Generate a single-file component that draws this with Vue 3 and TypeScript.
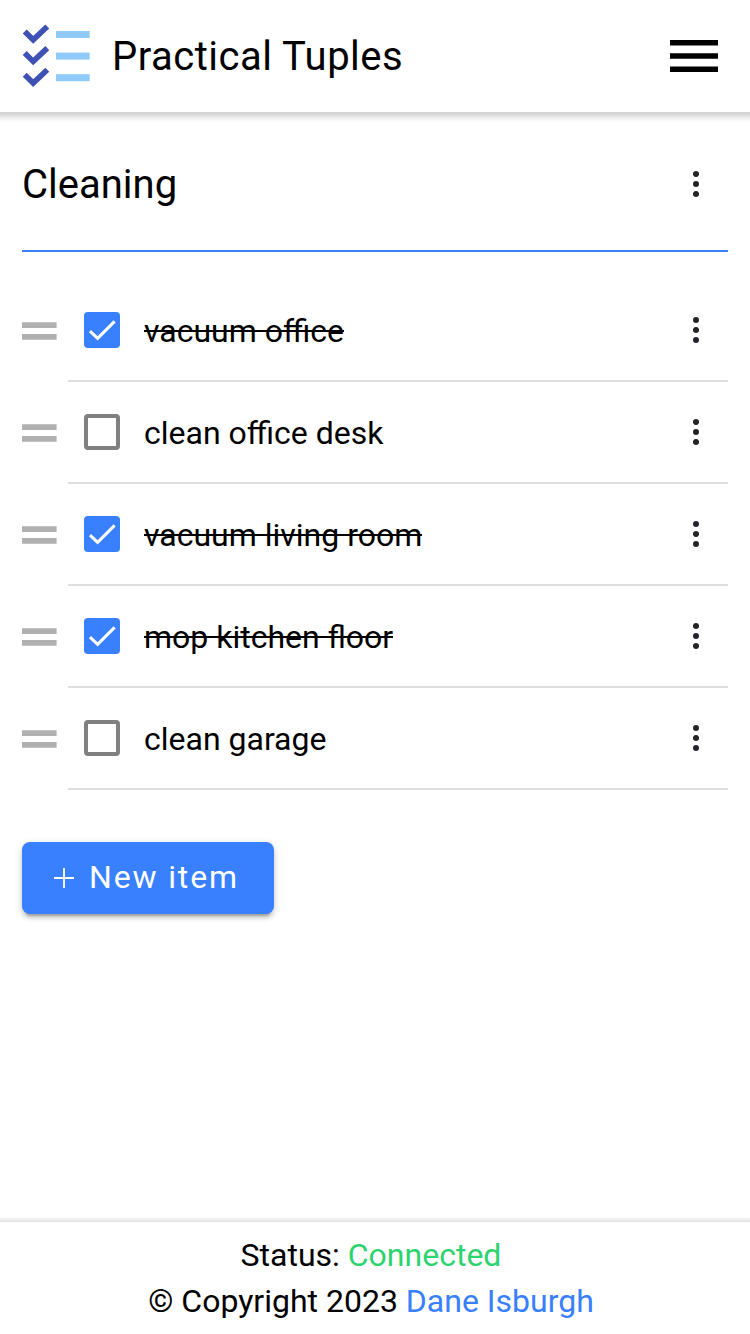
<script setup lang="ts">
import { ref } from 'vue'

interface Item {
  label: string
  done: boolean
}

const items = ref<Item[]>([
  { label: 'vacuum office', done: true },
  { label: 'clean office desk', done: false },
  { label: 'vacuum living room', done: true },
  { label: 'mop kitchen floor', done: true },
  { label: 'clean garage', done: false },
])
</script>

<template>
  <div class="page">
    <header class="header">
      <svg class="logo" width="72" height="72" viewBox="0 0 72 72">
        <g v-for="n in 3" :key="n" :transform="`translate(0 ${(n - 1) * 21.6})`">
          <path d="M4.7 11.5 13.2 19.8 27.3 6.5" fill="none" stroke="#3f51b5" stroke-width="5.6" />
          <rect x="36" y="11" width="33.7" height="7" fill="#90caf9" />
        </g>
      </svg>
      <h1 class="title brand">Practical Tuples</h1>
      <button class="menu" aria-label="Menu">
        <svg width="48" height="32" viewBox="0 0 48 32">
          <path d="M0 0h48v5.4H0zM0 13.3h48v5.4H0zM0 26.6h48V32H0z" />
        </svg>
      </button>
    </header>

    <main class="content">
      <div class="list-head">
        <h2 class="title">Cleaning</h2>
        <button class="more" aria-label="List options">
          <svg width="6" height="26" viewBox="0 0 6 26">
            <circle v-for="n in 3" :key="n" cx="3" :cy="n * 10 - 7" r="3" />
          </svg>
        </button>
      </div>
      <ul class="items">
        <li v-for="item in items" :key="item.label" class="item">
          <svg class="grip" width="35" height="18" viewBox="0 0 35 18">
            <path d="M0 0.3h34.6V6H0zM0 12h34.6v5.7H0z" />
          </svg>
          <div class="row">
            <button
              class="box"
              :class="{ checked: item.done }"
              role="checkbox"
              :aria-checked="item.done"
              @click="item.done = !item.done"
            >
              <svg v-if="item.done" width="36" height="36" viewBox="0 0 36 36">
                <path d="M6 19.2 13.6 26.4 30.6 9.4" />
              </svg>
            </button>
            <span class="label" :class="{ done: item.done }">{{ item.label }}</span>
            <button class="more" aria-label="Item options">
              <svg width="6" height="26" viewBox="0 0 6 26">
                <circle v-for="n in 3" :key="n" cx="3" :cy="n * 10 - 7" r="3" />
              </svg>
            </button>
          </div>
        </li>
      </ul>
      <button class="add">
        <svg width="20" height="20" viewBox="0 0 20 20">
          <path d="M10 0v20M0 10h20" stroke="#fff" stroke-width="1.8" />
        </svg>
        <span>New item</span>
      </button>
    </main>

    <footer class="footer">
      <div>Status: <span class="ok">Connected</span></div>
      <div>© Copyright 2023 <a class="link">Dane Isburgh</a></div>
    </footer>
  </div>
</template>

<style>
body {
  margin: 0;
  background: #fff;
}
</style>

<style scoped>
.page {
  display: flex;
  flex-direction: column;
  height: 1334px;
  overflow: hidden;
  font-family: Roboto, "Liberation Sans", sans-serif;
  font-size: 32px;
  color: #000;
}
button {
  padding: 0;
  border: 0;
  background: none;
  font: inherit;
}
svg {
  display: block;
}
.header {
  display: flex;
  align-items: center;
  box-sizing: border-box;
  height: 112px;
  flex: none;
  padding: 0 32px 0 20px;
}
.header::after {
  content: "";
  position: absolute;
  top: 112px;
  left: 0;
  right: 0;
  height: 10px;
  background: linear-gradient(#d3d3d3 0, #d6d6d6 20%, #e6e6e6 45%, #f5f5f5 72%, #fff 100%);
}
.title {
  margin: 0;
  padding-top: 2px;
  font-size: 40px;
  font-weight: 400;
  line-height: 48px;
}
.brand {
  letter-spacing: 0.5px;
}
.logo {
  margin-right: 20px;
}
.menu {
  margin-left: auto;
}
.content {
  flex: 1;
  padding: 0 22px;
}
.list-head {
  display: flex;
  align-items: center;
  justify-content: space-between;
  box-sizing: border-box;
  height: 140px;
  padding-top: 6px;
  border-bottom: 2px solid #3880ff;
}
.more {
  width: 6px;
  margin: 0 29px 0 auto;
  fill: #222428;
}
.items {
  margin: 28px 0 0;
  padding: 0;
  list-style: none;
}
.item {
  display: flex;
  align-items: center;
  height: 102px;
}
.grip {
  flex: none;
  width: 35px;
  margin-right: 11px;
  fill: #b0b0b0;
}
.row {
  flex: 1;
  display: flex;
  align-items: center;
  box-sizing: border-box;
  height: 102px;
  padding-left: 16px;
  border-bottom: 2px solid #dedede;
}
.box {
  flex: none;
  box-sizing: border-box;
  width: 36px;
  height: 36px;
  border: 4px solid #808080;
  border-radius: 4px;
}
.box.checked {
  border: 0;
  background: #3880ff;
}
.box path {
  fill: none;
  stroke: #fff;
  stroke-width: 3;
}
.label {
  margin-left: 24px;
  padding-top: 2px;
  line-height: 40px;
}
.label.done {
  background: linear-gradient(#000, #000) 0 21px / 100% 2px no-repeat;
}
.add {
  display: flex;
  align-items: center;
  box-sizing: border-box;
  width: 252px;
  height: 72px;
  margin-top: 52px;
  padding-left: 32px;
  border-radius: 8px;
  background: #3880ff;
  color: #fff;
  letter-spacing: 1.85px;
  box-shadow: 0 6px 2px -4px rgba(0, 0, 0, 0.2), 0 4px 4px 0 rgba(0, 0, 0, 0.14), 0 2px 10px 0 rgba(0, 0, 0, 0.12);
}
.add span {
  padding-bottom: 2px;
}
.add svg {
  margin-right: 15px;
}
.footer {
  box-sizing: border-box;
  height: 116px;
  flex: none;
  padding: 14px 8px 0 0;
  background: linear-gradient(#f3f3f3, #ececec 60%, #dedede) 0 0 / 100% 4px no-repeat;
  text-align: center;
  line-height: 46px;
}
.ok {
  color: #2dd36f;
}
.link {
  color: #3880ff;
}
</style>
